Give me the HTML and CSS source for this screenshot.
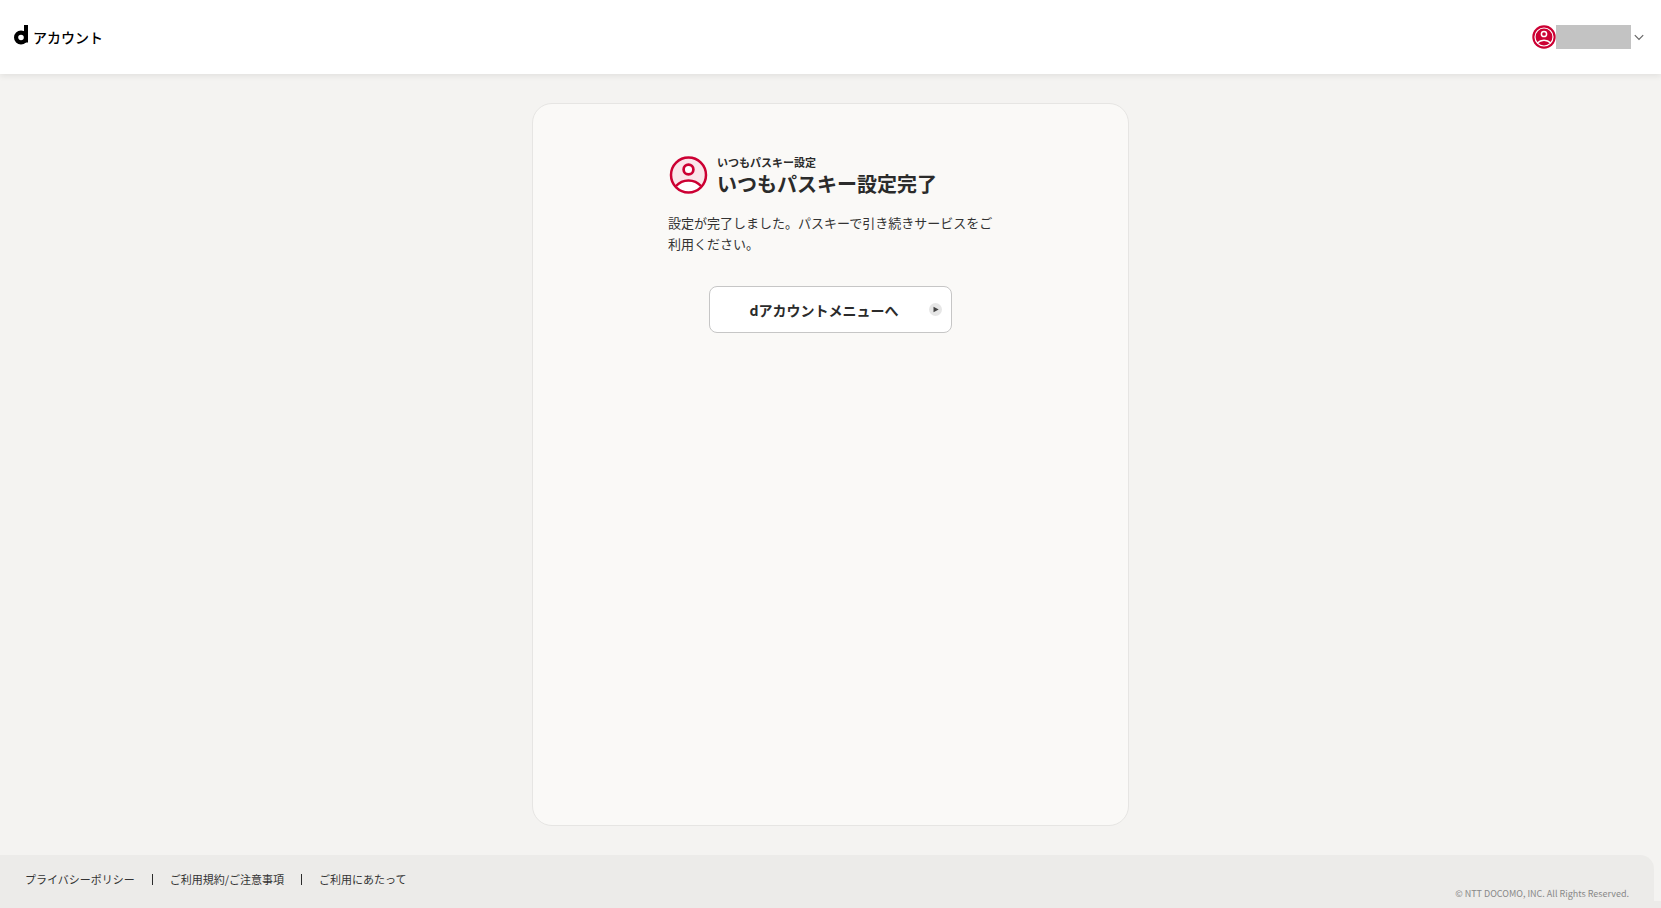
FILE: index.html
```html
<!DOCTYPE html>
<html lang="ja">
<head>
  <meta charset="UTF-8">
  <meta name="viewport" content="width=device-width, initial-scale=1.0">
  <title>いつもパスキー設定完了</title>
  <link rel="stylesheet" href="styles.css">
</head>
<body>

  <!-- Header -->
  <header class="header">
    <a class="logo" href="#">
      <svg class="logo-mark" viewBox="0 0 15 20" aria-hidden="true">
        <circle cx="7" cy="12.500" r="4.900" fill="none" stroke="#000" stroke-width="4.200"/>
        <path d="M10 0h4v17.500h-4z"/>
      </svg>
      <span class="logo-text">アカウント</span>
    </a>
    <button class="account" type="button" aria-label="アカウントメニュー">
      <svg class="account-icon" viewBox="0 0 24 24" aria-hidden="true">
        <circle cx="12" cy="12" r="11.700" fill="#cc0033"/>
        <circle cx="12" cy="12" r="9" fill="none" stroke="#fff" stroke-width="1.200"/>
        <circle cx="12" cy="9" r="2.600" fill="none" stroke="#fff" stroke-width="1.500"/>
        <path d="M5.300 18C9 14.200 15 14.200 18.700 18" fill="none" stroke="#fff" stroke-width="1.500"/>
      </svg>
      <span class="account-name"></span>
      <svg class="account-arrow" viewBox="0 0 10 8" aria-hidden="true">
        <path d="M0.800 2.200L5 6.500L9.200 2.200" fill="none" stroke="#666" stroke-width="1.200"/>
      </svg>
    </button>
  </header>

  <!-- Main Content -->
  <main class="main">
    <section class="card">
      <div class="content">
        <div class="title">
          <svg class="title-icon" viewBox="0 0 40 40" aria-hidden="true">
            <circle cx="20.500" cy="21" r="17.500" fill="#fae5ea"/>
            <path d="M8.500 32C14.500 24.500 26.500 24.500 32.500 32C26.500 40 14.500 40 8.500 32z" fill="#fff"/>
            <path d="M8 32C14.500 24.500 26.500 24.500 33 32" fill="none" stroke="#cc0033" stroke-width="2.500"/>
            <circle cx="20.500" cy="21" r="17.500" fill="none" stroke="#cc0033" stroke-width="2.500"/>
            <circle cx="20.500" cy="15.500" r="4.900" fill="#fff" stroke="#cc0033" stroke-width="2.700"/>
          </svg>
          <div>
            <p class="title-sub">いつもパスキー設定</p>
            <h1 class="title-main">いつもパスキー設定完了</h1>
          </div>
        </div>
        <p class="message">設定が完了しました。パスキーで引き続きサービスをご利用ください。</p>
        <button class="menu-button" type="button">
          <span class="menu-label">dアカウントメニューへ</span>
          <svg class="menu-arrow" viewBox="0 0 13 13" aria-hidden="true">
            <circle cx="6.500" cy="6.500" r="6.500" fill="#e6e6e6"/>
            <path d="M4.500 3.700L9.700 6.500L4.500 9.300z" fill="#444"/>
          </svg>
        </button>
      </div>
    </section>
  </main>

  <!-- Footer -->
  <footer class="footer">
    <ul class="footer-links">
      <li><a href="#">プライバシーポリシー</a></li>
      <li><a href="#">ご利用規約/ご注意事項</a></li>
      <li><a href="#">ご利用にあたって</a></li>
    </ul>
    <small class="copyright">© NTT DOCOMO, INC. All Rights Reserved.</small>
  </footer>

</body>
</html>
```
FILE: styles.css
```css
/* Global Styles */
* {
  box-sizing: border-box;
}

body {
  display: flex;
  flex-direction: column;
  min-height: 100vh;
  margin: 0;
  background-color: #f4f3f1;
  color: #333;
  font-family: "Noto Sans CJK JP", sans-serif;
}

a {
  color: inherit;
  text-decoration: none;
}

button {
  color: inherit;
  font-family: inherit;
  cursor: pointer;
}

/* Header */
.header {
  display: flex;
  align-items: center;
  justify-content: space-between;
  height: 74px;
  padding: 0 17px 0 14px;
  background-color: #fff;
  box-shadow: 0 2px 6px rgba(0, 0, 0, 0.08);
}

.logo {
  display: flex;
  align-items: center;
  gap: 4px;
  color: #000;
}

.logo-mark {
  width: 15px;
  height: 20px;
  margin-bottom: 4px;
}

.logo-text {
  font-size: 14px;
  font-weight: 500;
  line-height: 22px;
}

.account {
  display: flex;
  align-items: center;
  padding: 0;
  border: 0;
  background: none;
}

.account-icon {
  width: 24px;
  height: 24px;
}

.account-name {
  width: 75px;
  height: 24px;
  background-color: #c3c3c3;
}

.account-arrow {
  width: 10px;
  height: 8px;
  margin-left: 3px;
}

/* Main Content */
.main {
  display: flex;
  flex: 1;
  justify-content: center;
  padding: 29px 20px;
}

.card {
  width: 100%;
  max-width: 597px;
  padding: 48px 20px;
  border: 1px solid #e6e5e3;
  border-radius: 20px;
  background-color: #faf9f7;
}

.content {
  max-width: 325px;
  margin: 0 auto;
}

.title {
  display: flex;
  align-items: center;
  gap: 9px;
  color: #2b2b2b;
}

.title-icon {
  width: 40px;
  height: 40px;
}

.title-sub {
  margin: 0;
  font-size: 11px;
  font-weight: 700;
  line-height: 20px;
}

.title-main {
  margin: 0;
  font-size: 20px;
  font-weight: 700;
  line-height: 24px;
}

.message {
  margin: 16px 0 32px;
  font-size: 13px;
  line-height: 21px;
}

.menu-button {
  display: flex;
  align-items: center;
  width: 243px;
  height: 47px;
  margin: 0 auto;
  padding: 0 9px;
  border: 1px solid #c6c6c6;
  border-radius: 8px;
  background-color: #fff;
}

.menu-label {
  flex: 1;
  color: #2b2b2b;
  font-size: 14px;
  font-weight: 700;
}

.menu-arrow {
  width: 13px;
  height: 13px;
}

/* Footer */
.footer {
  position: relative;
  display: flex;
  justify-content: space-between;
  height: 53px;
  margin-right: 7px;
  padding: 0 25px;
  border-top-right-radius: 14px;
  background-color: #ecebe9;
}

/* strip that runs on to the window edge */
.footer::after {
  content: "";
  position: absolute;
  right: -7px;
  bottom: 0;
  width: 7px;
  height: 7px;
  background-color: #ecebe9;
}

.footer-links {
  display: flex;
  align-items: flex-start;
  margin: 16px 0 0;
  padding: 0;
  list-style: none;
  font-size: 11px;
  line-height: 16px;
}

.footer-links li {
  display: flex;
  align-items: center;
}

.footer-links li + li::before {
  content: "";
  width: 1px;
  height: 11px;
  margin: 0 17px;
  background-color: #2b2b2b;
}

.copyright {
  align-self: flex-end;
  padding-bottom: 7px;
  color: #888;
  font-size: 9px;
  line-height: 14px;
}
```
